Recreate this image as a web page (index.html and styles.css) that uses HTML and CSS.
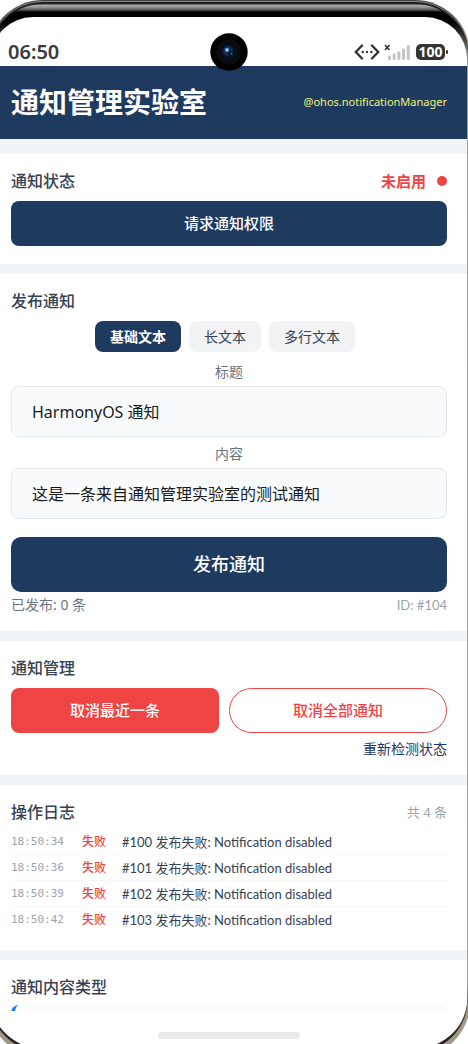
FILE: index.html
```html
<!DOCTYPE html>
<html lang="zh-CN">
<head>
<meta charset="utf-8">
<meta name="viewport" content="width=device-width, initial-scale=1">
<title>通知管理实验室</title>
<link rel="stylesheet" href="styles.css">
</head>
<body>
<div class="phone">
  <div class="camera">
    <svg viewBox="0 0 38 38" width="38" height="38" aria-hidden="true">
      <circle cx="19" cy="19" r="18.7" fill="#000"/>
      <circle cx="19" cy="19" r="12.5" fill="#0b0b0d"/>
      <circle cx="19" cy="19" r="8" fill="#0a1020"/>
      <circle cx="18" cy="18" r="5" fill="#132d55"/>
      <circle cx="21" cy="21" r="3" fill="#0a1730"/>
      <circle cx="17" cy="17" r="2" fill="#5ea4e6"/>
      <circle cx="17" cy="16.600" r="0.900" fill="#d5ecff"/>
      <circle cx="21.500" cy="20.500" r="1" fill="#2e6db8"/>
    </svg>
  </div>
  <div class="screen">
    <div class="status-bar">
      <span class="clock">06:50</span>
      <span class="indicators">
        <svg class="network" viewBox="0 0 26 16" width="26" height="16" aria-hidden="true">
          <path d="M8 1.500 L1.800 8 L8 14.500 M18 1.500 L24.200 8 L18 14.500" fill="none" stroke="#333" stroke-width="2.300" stroke-linecap="round"/>
          <circle cx="8.700" cy="8" r="1.200" fill="#333"/><circle cx="13" cy="8" r="1.200" fill="#333"/><circle cx="17.300" cy="8" r="1.200" fill="#333"/>
        </svg>
        <svg class="signal" viewBox="0 0 26 17" width="26" height="17" aria-hidden="true">
          <path d="M1 1 L5.500 6 M5.500 1 L1 6" stroke="#333" stroke-width="1.600"/>
          <g fill="#c4c4c4">
            <rect x="4" y="11.500" width="3" height="4.500" rx="1.200"/><rect x="8.700" y="9.500" width="3" height="6.500" rx="1.200"/><rect x="13.400" y="7.500" width="3" height="8.500" rx="1.200"/><rect x="18.100" y="4.500" width="3" height="11.500" rx="1.200"/><rect x="22.800" y="1" width="3" height="15" rx="1.200"/>
          </g>
        </svg>
        <span class="battery">100</span>
      </span>
    </div>

    <header class="app-header">
      <h1>通知管理实验室</h1>
      <span class="module">@ohos.notificationManager</span>
    </header>

    <main class="content">
      <section class="card">
        <div class="card-head">
          <h2>通知状态</h2>
          <span class="state">未启用<i class="dot"></i></span>
        </div>
        <button class="btn primary" type="button">请求通知权限</button>
      </section>

      <section class="card">
        <div class="card-head"><h2>发布通知</h2></div>
        <div class="tabs">
          <button class="tab active" type="button">基础文本</button>
          <button class="tab" type="button">长文本</button>
          <button class="tab" type="button">多行文本</button>
        </div>
        <label class="field-label first" for="title">标题</label>
        <input class="field" id="title" type="text" value="HarmonyOS 通知">
        <label class="field-label" for="body">内容</label>
        <input class="field" id="body" type="text" value="这是一条来自通知管理实验室的测试通知">
        <button class="btn primary publish" type="button">发布通知</button>
        <div class="summary"><span>已发布: 0 条</span><span class="next-id">ID: #104</span></div>
      </section>

      <section class="card">
        <div class="card-head"><h2>通知管理</h2></div>
        <div class="actions">
          <button class="btn danger" type="button">取消最近一条</button>
          <button class="btn outline" type="button">取消全部通知</button>
        </div>
        <div class="recheck"><a href="#">重新检测状态</a></div>
      </section>

      <section class="card log-card">
        <div class="card-head"><h2>操作日志</h2><span class="count">共 4 条</span></div>
        <ul class="log">
          <li><time>18:50:34</time><b>失败</b><span>#100 发布失败: Notification disabled</span></li>
          <li><time>18:50:36</time><b>失败</b><span>#101 发布失败: Notification disabled</span></li>
          <li><time>18:50:39</time><b>失败</b><span>#102 发布失败: Notification disabled</span></li>
          <li><time>18:50:42</time><b>失败</b><span>#103 发布失败: Notification disabled</span></li>
        </ul>
      </section>

      <section class="card types">
        <div class="card-head"><h2>通知内容类型</h2></div>
        <div class="peek"><div class="type-item"></div></div>
      </section>
    </main>
    <div class="home"><span></span></div>
  </div>
</div>
</body>
</html>
```
FILE: styles.css
```css
* { box-sizing: border-box; }

html, body {
  height: 100%;
  margin: 0;
  overflow: hidden;
  background: #fff;
}

body, button, input {
  font-family: "Noto Sans", "Noto Sans CJK SC", sans-serif;
}

h1, h2, ul { margin: 0; padding: 0; }

.phone {
  position: relative;
  margin: 0 -2px 0 -12px;
  padding: 17px 3px 9px;
  border-radius: 55px;
  background:
    linear-gradient(to bottom, transparent 980px, #2a2826 1030px),
    linear-gradient(to bottom, #333 0, #333 4px, #aaa 5px, #999 7px, #555 10px, #000 12px, #000 22px, #9c9c9c 60px, #a6a6a6 100%);
  box-shadow:
    inset 0 -3px 0 2px #a09886,
    inset 0 0 0 1px #444,
    inset 0 1px 0 1px #858585,
    inset 0 3px 0 1px #222;
}

.camera {
  position: absolute;
  top: 33px;
  left: 50%;
  margin-left: -19px;
  height: 38px;
}

.camera svg { display: block; }

.screen {
  overflow: hidden;
  border-radius: 42px 42px 50px 50px;
  background: #fff;
}

.status-bar {
  display: flex;
  justify-content: space-between;
  align-items: flex-end;
  height: 49px;
  padding: 0 19px 0 17px;
}

.clock {
  height: 28px;
  font: 600 20px/28px "Noto Sans", sans-serif;
  color: #3a3a3a;
}

.indicators {
  display: flex;
  align-items: center;
  height: 28px;
}

.network { margin-right: 4px; }
.signal { margin-right: 6px; }

.battery {
  position: relative;
  width: 29px;
  height: 16px;
  margin-right: 3px;
  border-radius: 5px;
  background: #333;
  color: #fff;
  font: 700 14px/16px "Noto Sans", sans-serif;
  text-align: center;
}

.battery::after {
  content: "";
  position: absolute;
  top: 6px;
  right: -3px;
  width: 2px;
  height: 4px;
  border-radius: 1px;
  background: #333;
}

.app-header {
  display: flex;
  justify-content: space-between;
  align-items: center;
  height: 73px;
  padding: 0 20px 2px;
  background: #1f3a5f;
}

h1 {
  font-size: 28px;
  line-height: 40px;
  font-weight: 700;
  color: #fff;
}

.module {
  font-size: 11px;
  line-height: 16px;
  color: #f0f27a;
}

.content {
  display: flex;
  flex-direction: column;
  gap: 10px;
  padding-top: 15px;
  background: #f2f3f5;
}

.card {
  padding: 16px 20px;
  background: #fff;
}

.card:first-child { padding-bottom: 18px; }
.log-card { padding-bottom: 17px; }
.types { padding-bottom: 0; }

.card-head {
  display: flex;
  justify-content: space-between;
  align-items: center;
  height: 22px;
  margin-bottom: 9px;
}

h2 {
  font-size: 16px;
  line-height: 22px;
  font-weight: 500;
  color: #374151;
}

.log-card .card-head { margin-bottom: 6px; }
.types .card-head { margin-bottom: 7px; }

.state {
  display: flex;
  align-items: center;
  gap: 11px;
  font-size: 15px;
  line-height: 22px;
  font-weight: 700;
  color: #ef4444;
}

.dot {
  width: 10px;
  height: 10px;
  border-radius: 50%;
  background: #ef4444;
}

button {
  margin: 0;
  padding: 0;
  border: 0;
  cursor: pointer;
}

.btn {
  display: block;
  width: 100%;
  height: 45px;
  padding-bottom: 2px;
  border-radius: 8px;
  font-size: 15px;
  font-weight: 500;
  color: #fff;
}

.primary { background: #1f3a5f; }

.publish {
  height: 55px;
  margin-top: 18px;
  padding-bottom: 4px;
  border-radius: 10px;
  font-size: 18px;
}

.tabs {
  display: flex;
  justify-content: center;
}

.tab {
  height: 31px;
  margin-right: 8px;
  padding: 0 15px 2px;
  border-radius: 8px;
  background: #f2f3f5;
  font-size: 14px;
  color: #374151;
}

.tab.active {
  background: #1f3a5f;
  font-weight: 700;
  color: #fff;
}

.field-label {
  display: block;
  margin: 7px 0 4px;
  font-size: 14px;
  line-height: 20px;
  text-align: center;
  color: #6b7280;
}

.field-label.first { margin-top: 10px; }

.field {
  display: block;
  width: 100%;
  height: 51px;
  padding: 0 20px 2px;
  border: 1px solid #e5e7eb;
  border-radius: 8px;
  background: #f9fafc;
  font-size: 16px;
  color: #1a1a1a;
}

.summary {
  display: flex;
  justify-content: space-between;
  margin-top: 3px;
  font-size: 14px;
  line-height: 20px;
  color: #6b7280;
}

.next-id {
  font-family: Lato, sans-serif;
  font-size: 13px;
  color: #9ca3af;
}

.actions {
  display: grid;
  grid-template-columns: 1fr 1fr;
}

.danger {
  width: auto;
  margin-right: 10px;
  background: #ef4444;
}

.outline {
  border: 1px solid #ef4444;
  border-radius: 23px;
  background: #fff;
  color: #ef4444;
}

.recheck {
  margin-top: 6px;
  font-size: 14px;
  line-height: 20px;
  text-align: right;
}

.recheck a {
  color: #1f3a5f;
  text-decoration: none;
}

.count {
  font-size: 13px;
  line-height: 20px;
  color: #9ca3af;
}

.log { list-style: none; }

.log li {
  display: flex;
  align-items: center;
  height: 26px;
  border-bottom: 1px solid #f6f7f8;
  font-family: Lato, "Noto Sans CJK SC", sans-serif;
  font-size: 13px;
  line-height: 20px;
  color: #374151;
}

.log li:last-child { border-bottom-color: transparent; }

.log time {
  width: 71px;
  font-family: "DejaVu Sans Mono", monospace;
  font-size: 11px;
  color: #9ca3af;
}

.log b {
  width: 40px;
  font-size: 12px;
  font-weight: 500;
  color: #ef4444;
}

.peek {
  height: 6px;
  overflow: hidden;
}

.type-item {
  height: 60px;
  border-left: 4px solid #1677ff;
  border-radius: 8px;
  background: #f9fafc;
}

.home {
  display: flex;
  justify-content: center;
  padding: 21px 0 9px;
  background: #fff;
}

.home span {
  width: 142px;
  height: 7px;
  border-radius: 4px;
  background: #e9e9e9;
}
```
